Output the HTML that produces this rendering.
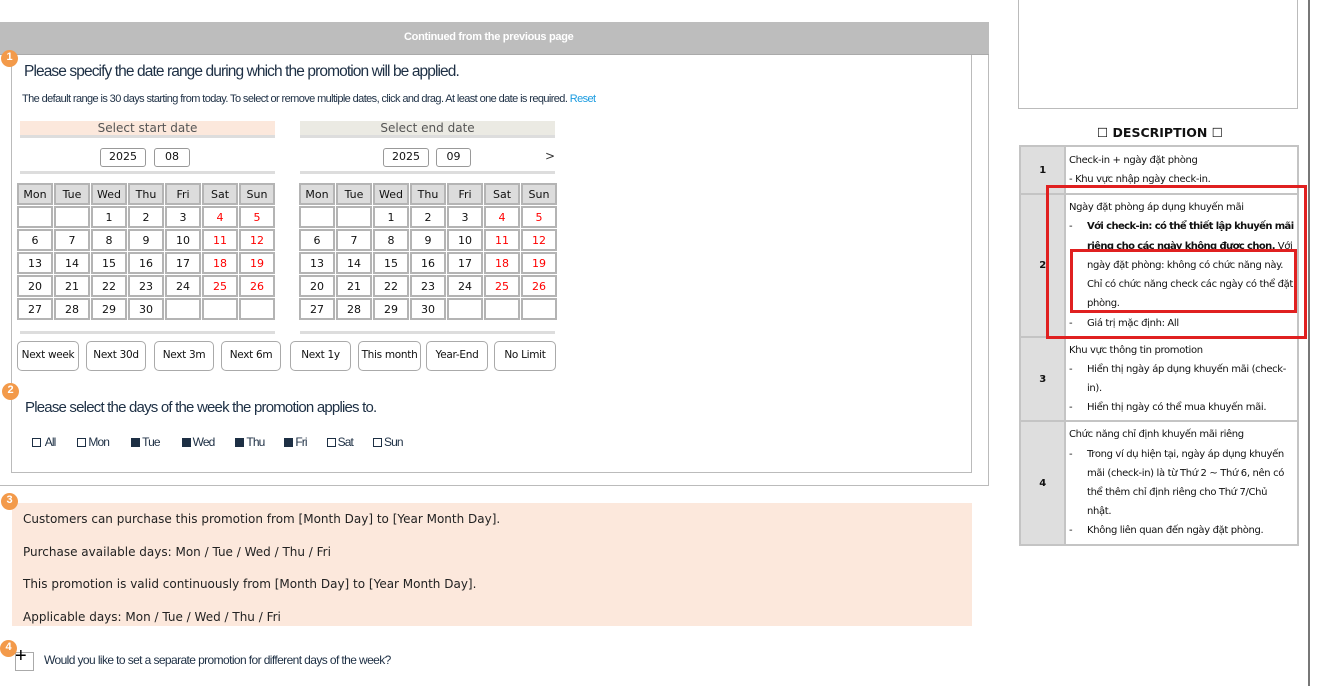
<!DOCTYPE html>
<html><head><meta charset="utf-8"><style>
*{box-sizing:border-box;margin:0;padding:0}
body{width:1317px;height:686px;position:relative;background:#fff;font-family:"DejaVu Sans","Noto Sans CJK KR",sans-serif;overflow:hidden;color:#111}
.a{position:absolute}
.c{font-family:"Liberation Sans",sans-serif;color:#1d2f44;letter-spacing:-0.6px;white-space:nowrap}
.num{position:absolute;width:17px;height:17px;border-radius:50%;background:#f39a4a;color:#fff;font:bold 11px "Liberation Sans",sans-serif;text-align:center;line-height:15px}
table.cal{position:absolute;border-collapse:separate;border-spacing:1px;font-size:11px;font-family:"DejaVu Sans",sans-serif}
table.cal td{width:36px;height:22px;border:2px solid #b4b4b4;text-align:center;background:#fff;padding:0}
table.cal tr:first-child td{background:#dcdcdc}
.r{color:#f00}
.btn{position:absolute;top:341px;height:30px;border:1.5px solid #aaa;border-radius:5px;font-size:10.5px;letter-spacing:-0.3px;white-space:nowrap;text-align:center;line-height:26px;background:#fff}
.inp{position:absolute;top:148px;height:19px;border:1.5px solid #999;border-radius:3px;font-size:11px;text-align:center;line-height:16px}
.desc{position:absolute;left:1019px;width:280px;border-collapse:collapse;font-size:10px;letter-spacing:-0.35px}
.desc td{border:2px solid #c4c4c4;vertical-align:middle}
.desc td.n{width:45px;background:#dedede;text-align:center;font-weight:bold}
.desc td.t{padding:1px 3px;line-height:19.2px}
.li{padding-left:18px;text-indent:-18px}
.li b{display:inline-block;width:18px;text-indent:0;font-weight:normal}
.cb{display:inline-block;width:9px;height:9px;border:1px solid #1d2f44;margin-right:2px;vertical-align:-1px}
.cb.f{background:#1d2f44}
</style></head><body>
<div class="a" style="left:-2px;top:22px;width:991px;height:464px;border:1.5px solid #bbb"></div>
<div class="a" style="left:0;top:22px;width:989px;height:33px;background:#bdbdbd;border-bottom:1.5px solid #aaa"></div>
<div class="a" style="left:404px;top:31px;color:#fff;font:bold 11px 'Liberation Sans',sans-serif;letter-spacing:-0.3px">Continued from the previous page</div>
<div class="a" style="left:11px;top:55px;width:961px;height:418px;border:1.5px solid #bbb;border-top:none"></div>
<div class="num" style="left:1px;top:50px">1</div>
<div class="a c" style="left:24px;top:63px;font-size:15.5px;letter-spacing:-0.9px">Please specify the date range during which the promotion will be applied.</div>
<div class="a c" style="left:22px;top:93px;font-size:11px;letter-spacing:-0.6px">The default range is 30 days starting from today. To select or remove multiple dates, click and drag. At least one date is required. <span style="color:#1a9be0">Reset</span></div>
<div class="a" style="left:20px;top:121px;width:255px;height:17px;background:#fce8dc;border-bottom:3px solid #ddd;text-align:center;font:12px 'DejaVu Sans',sans-serif;color:#555;line-height:15px">Select start date</div>
<div class="a" style="left:300px;top:121px;width:255px;height:17px;background:#ebeae3;border-bottom:3px solid #ddd;text-align:center;font:12px 'DejaVu Sans',sans-serif;color:#555;line-height:15px">Select end date</div>
<div class="inp" style="left:100px;width:46px">2025</div><div class="inp" style="left:154px;width:36px">08</div>
<div class="inp" style="left:383px;width:46px">2025</div><div class="inp" style="left:436px;width:35px">09</div>
<div class="a" style="left:545px;top:149px;font-size:12px;color:#333">&gt;</div>
<div class="a" style="left:20px;top:171px;width:255px;height:3px;background:#ddd"></div>
<div class="a" style="left:300px;top:171px;width:255px;height:3px;background:#ddd"></div>
<div class="a" style="left:20px;top:331px;width:255px;height:3px;background:#ddd"></div>
<div class="a" style="left:300px;top:331px;width:255px;height:3px;background:#ddd"></div>
<table class="cal" style="left:16px;top:182px">
<tr><td>Mon</td><td>Tue</td><td>Wed</td><td>Thu</td><td>Fri</td><td>Sat</td><td>Sun</td></tr>
<tr><td></td><td></td><td>1</td><td>2</td><td>3</td><td class="r">4</td><td class="r">5</td></tr>
<tr><td>6</td><td>7</td><td>8</td><td>9</td><td>10</td><td class="r">11</td><td class="r">12</td></tr>
<tr><td>13</td><td>14</td><td>15</td><td>16</td><td>17</td><td class="r">18</td><td class="r">19</td></tr>
<tr><td>20</td><td>21</td><td>22</td><td>23</td><td>24</td><td class="r">25</td><td class="r">26</td></tr>
<tr><td>27</td><td>28</td><td>29</td><td>30</td><td></td><td></td><td></td></tr>
</table>
<table class="cal" style="left:298px;top:182px">
<tr><td>Mon</td><td>Tue</td><td>Wed</td><td>Thu</td><td>Fri</td><td>Sat</td><td>Sun</td></tr>
<tr><td></td><td></td><td>1</td><td>2</td><td>3</td><td class="r">4</td><td class="r">5</td></tr>
<tr><td>6</td><td>7</td><td>8</td><td>9</td><td>10</td><td class="r">11</td><td class="r">12</td></tr>
<tr><td>13</td><td>14</td><td>15</td><td>16</td><td>17</td><td class="r">18</td><td class="r">19</td></tr>
<tr><td>20</td><td>21</td><td>22</td><td>23</td><td>24</td><td class="r">25</td><td class="r">26</td></tr>
<tr><td>27</td><td>28</td><td>29</td><td>30</td><td></td><td></td><td></td></tr>
</table>
<div class="btn" style="left:17px;width:62px">Next week</div>
<div class="btn" style="left:86px;width:60px">Next 30d</div>
<div class="btn" style="left:154px;width:60px">Next 3m</div>
<div class="btn" style="left:221px;width:60px">Next 6m</div>
<div class="btn" style="left:290px;width:61px">Next 1y</div>
<div class="btn" style="left:358px;width:63px">This month</div>
<div class="btn" style="left:426px;width:62px">Year-End</div>
<div class="btn" style="left:494px;width:62px">No Limit</div>
<div class="num" style="left:2px;top:383px">2</div>
<div class="a c" style="left:25px;top:399px;font-size:15px;letter-spacing:-0.8px">Please select the days of the week the promotion applies to.</div>
<div class="a c" style="left:32px;top:435px;font-size:12px;letter-spacing:-0.9px">
<span class="cb"></span> All<span style="margin-left:22px"></span><span class="cb"></span>Mon<span style="margin-left:22px"></span><span class="cb f"></span>Tue<span style="margin-left:22px"></span><span class="cb f"></span>Wed<span style="margin-left:21px"></span><span class="cb f"></span>Thu<span style="margin-left:20px"></span><span class="cb f"></span>Fri<span style="margin-left:20px"></span><span class="cb"></span>Sat<span style="margin-left:20px"></span><span class="cb"></span>Sun</div>
<div class="a" style="left:12px;top:503px;width:960px;height:123px;background:#fce8dc;font-size:12px;color:#222;padding:0 0 0 11px;line-height:32.5px">
Customers can purchase this promotion from [Month Day] to [Year Month Day].<br>Purchase available days: Mon / Tue / Wed / Thu / Fri<br>This promotion is valid continuously from [Month Day] to [Year Month Day].<br>Applicable days: Mon / Tue / Wed / Thu / Fri</div>
<div class="num" style="left:1px;top:493px">3</div>
<div class="a" style="left:15px;top:652px;width:19px;height:19px;border:1.5px solid #aaa;background:#fff"></div>
<div class="a" style="left:15px;top:645px;font:20px 'Liberation Sans',sans-serif;color:#000">+</div>
<div class="num" style="left:0;top:640px">4</div>
<div class="a c" style="left:44px;top:653px;font-size:12px;letter-spacing:-0.6px">Would you like to set a separate promotion for different days of the week?</div>
<div class="a" style="left:1018px;top:-2px;width:280px;height:111px;border:1.5px solid #bbb"></div>
<div class="a" style="left:1308px;top:0;width:2px;height:686px;background:#777"></div>
<div class="a" style="left:1097px;top:125px;font:bold 12.5px 'DejaVu Sans',sans-serif">☐ DESCRIPTION ☐</div>
<table class="desc" style="top:145px">
<tr style="height:48px"><td class="n">1</td><td class="t">Check-in + ngày đặt phòng<br>- Khu vực nhập ngày check-in.</td></tr>
<tr style="height:143px"><td class="n">2</td><td class="t">Ngày đặt phòng áp dụng khuyến mãi<div class="li"><b>-</b><strong style="letter-spacing:-0.6px">Với check-in: có thể thiết lập khuyến mãi riêng cho các ngày không được chọn.</strong> Với ngày đặt phòng: không có chức năng này. Chỉ có chức năng check các ngày có thể đặt phòng.</div><div class="li"><b>-</b>Giá trị mặc định: All</div></td></tr>
<tr style="height:84px"><td class="n">3</td><td class="t">Khu vực thông tin promotion<div class="li"><b>-</b>Hiển thị ngày áp dụng khuyến mãi (check-in).</div><div class="li"><b>-</b>Hiển thị ngày có thể mua khuyến mãi.</div></td></tr>
<tr style="height:124px"><td class="n">4</td><td class="t">Chức năng chỉ định khuyến mãi riêng<div class="li"><b>-</b>Trong ví dụ hiện tại, ngày áp dụng khuyến mãi (check-in) là từ Thứ 2 ~ Thứ 6, nên có thể thêm chỉ định riêng cho Thứ 7/Chủ nhật.</div><div class="li"><b>-</b>Không liên quan đến ngày đặt phòng.</div></td></tr>
</table>
<div class="a" style="left:1046px;top:185px;width:261px;height:154px;border:3px solid #e02020"></div>
<div class="a" style="left:1070px;top:249px;width:227px;height:64px;border:3px solid #e02020"></div>
</body></html>
